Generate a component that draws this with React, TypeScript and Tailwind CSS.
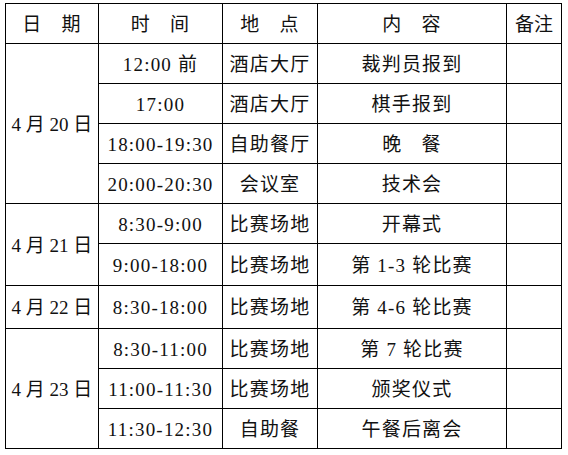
const font = '[font-family:"Liberation_Serif","Noto_Sans_CJK_SC",serif]';

type Row = { date?: { label: string; span: string }; time: string; place: string; content: React.ReactNode };

const rows: Row[] = [
  { date: { label: '4 月 20 日', span: 'row-span-4' }, time: '12:00 前', place: '酒店大厅', content: '裁判员报到' },
  { time: '17:00', place: '酒店大厅', content: '棋手报到' },
  { time: '18:00-19:30', place: '自助餐厅', content: <Spaced a="晚" b="餐" /> },
  { time: '20:00-20:30', place: '会议室', content: '技术会' },
  { date: { label: '4 月 21 日', span: 'row-span-2' }, time: '8:30-9:00', place: '比赛场地', content: '开幕式' },
  { time: '9:00-18:00', place: '比赛场地', content: '第 1-3 轮比赛' },
  { date: { label: '4 月 22 日', span: '' }, time: '8:30-18:00', place: '比赛场地', content: '第 4-6 轮比赛' },
  { date: { label: '4 月 23 日', span: 'row-span-3' }, time: '8:30-11:00', place: '比赛场地', content: '第 7 轮比赛' },
  { time: '11:00-11:30', place: '比赛场地', content: '颁奖仪式' },
  { time: '11:30-12:30', place: '自助餐', content: '午餐后离会' },
];

function Spaced({ a, b }: { a: string; b: string }) {
  return (
    <span className="flex gap-[19px]">
      <span>{a}</span>
      <span>{b}</span>
    </span>
  );
}

function Cell({ children, className = '' }: { children?: React.ReactNode; className?: string }) {
  return (
    <div className={`bg-white flex items-center justify-center pt-[3px] whitespace-pre ${className}`}>
      {children}
    </div>
  );
}

export default function App() {
  return (
    <div className={`min-h-screen bg-white pt-[3px] pl-[5px] text-[19px] tracking-[1.2px] text-[#111] ${font}`}>
      <div className="grid w-max grid-cols-[92px_123px_94px_188px_54px] grid-rows-[39px_39px_39px_39px_39px_39px_41px_42px_39px_39px_39px] gap-px bg-black p-px">
        <Cell><Spaced a="日" b="期" /></Cell>
        <Cell><Spaced a="时" b="间" /></Cell>
        <Cell><Spaced a="地" b="点" /></Cell>
        <Cell><Spaced a="内" b="容" /></Cell>
        <Cell className="tracking-normal">备注</Cell>

        {rows.map((r, i) => (
          <RowCells key={i} row={r} />
        ))}
      </div>
    </div>
  );
}

function RowCells({ row }: { row: Row }) {
  return (
    <>
      {row.date && <Cell className={`tracking-normal ${row.date.span}`}>{row.date.label}</Cell>}
      <Cell>{row.time}</Cell>
      <Cell>{row.place}</Cell>
      <Cell>{row.content}</Cell>
      <Cell />
    </>
  );
}
